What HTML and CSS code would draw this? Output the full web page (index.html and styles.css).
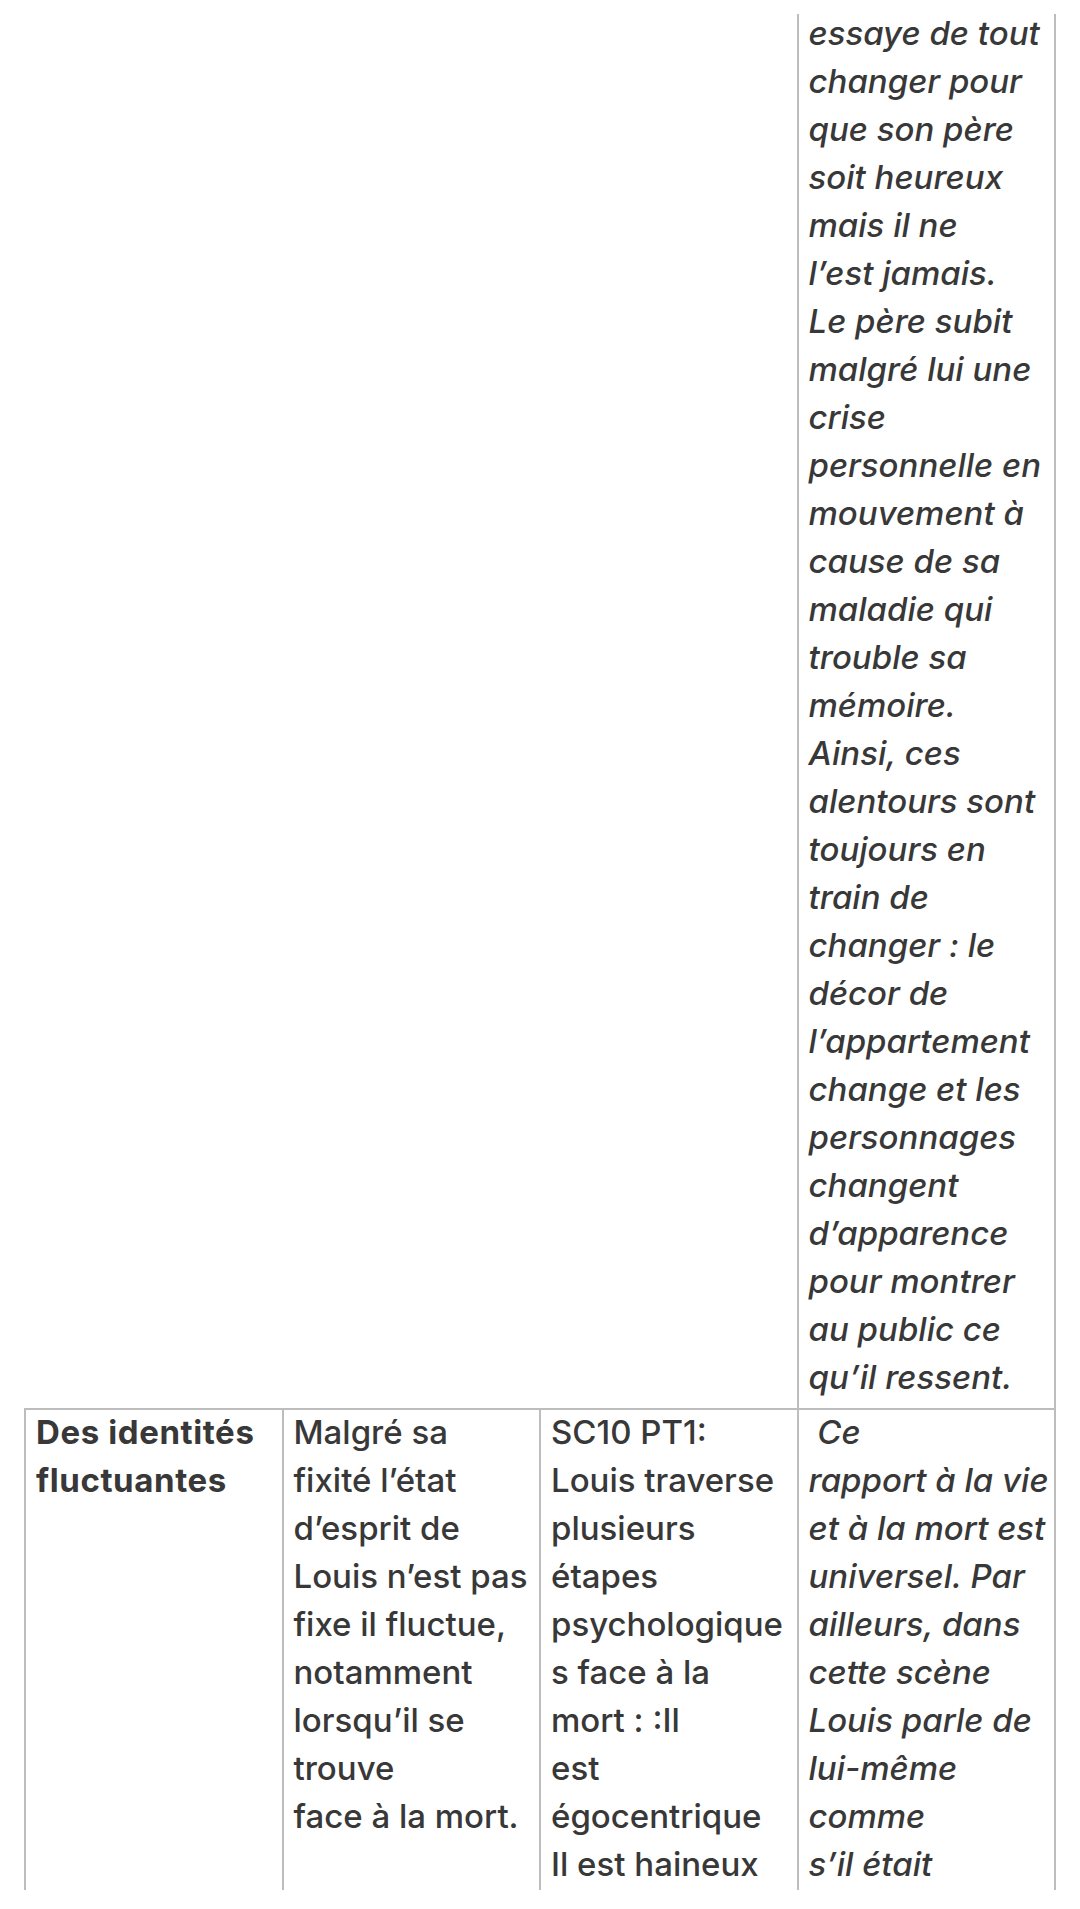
FILE: index.html
```html
<!DOCTYPE html>
<html lang="fr">
<head>
<meta charset="utf-8">
<title>Tableau</title>
<link rel="stylesheet" href="styles.css">
</head>
<body>
<div class="frame">
  <table class="sheet">
    <colgroup>
      <col class="c"><col class="c"><col class="c"><col class="c">
    </colgroup>
    <tr class="r1">
      <td class="blank"></td>
      <td class="blank"></td>
      <td class="blank"></td>
      <td class="cell it">essaye de tout<br>changer pour<br>que son père<br>soit heureux<br>mais il ne<br>l’est jamais.<br>Le père subit<br>malgré lui une<br>crise<br>personnelle en<br>mouvement à<br>cause de sa<br>maladie qui<br>trouble sa<br>mémoire.<br>Ainsi, ces<br>alentours sont<br>toujours en<br>train de<br>changer : le<br>décor de<br>l’appartement<br>change et les<br>personnages<br>changent<br>d’apparence<br>pour montrer<br>au public ce<br>qu’il ressent.</td>
    </tr>
    <tr class="r2">
      <td class="cell head"><div class="txt">Des identités<br>fluctuantes</div></td>
      <td class="cell"><div class="txt">Malgré sa<br>fixité l’état<br>d’esprit de<br>Louis n’est pas<br>fixe il fluctue,<br>notamment<br>lorsqu’il se<br>trouve<br>face à la mort.</div></td>
      <td class="cell"><div class="txt">SC10 PT1:<br>Louis traverse<br>plusieurs<br>étapes<br>psychologique<br>s face à la<br>mort : :Il<br>est<br>égocentrique<br>Il est haineux</div></td>
      <td class="cell it"><div class="txt">&nbsp;Ce<br>rapport à la vie<br>et à la mort est<br>universel. Par<br>ailleurs, dans<br>cette scène<br>Louis parle de<br>lui-même<br>comme<br>s’il était</div></td>
    </tr>
  </table>
</div>
</body>
</html>
```

FILE: styles.css
```css
html, body {
  margin: 0;
  padding: 0;
  background: #ffffff;
}

.frame {
  margin-top: 14px;
  height: 1876px;
  overflow: hidden;
  padding-left: 24px;
}

.sheet {
  margin-top: -7px;
  width: 1030px;
  table-layout: fixed;
  border-collapse: collapse;
  font-family: Inter, "Noto Sans", sans-serif;
  font-size: 33px;
  font-weight: 500;
  line-height: 48px;
  color: #383838;
}

.sheet .c {
  width: 257.5px;
}

.sheet td {
  vertical-align: top;
  white-space: nowrap;
  padding: 0 6px 7px 10px;
}

.sheet .cell {
  border: 2px solid #bdbdbd;
}

.sheet .blank {
  border: none;
}

.sheet .it {
  font-style: italic;
}

.sheet .head {
  font-weight: 700;
  letter-spacing: 0.6px;
}

.r2 .txt {
  margin-top: -2px;
}
```
